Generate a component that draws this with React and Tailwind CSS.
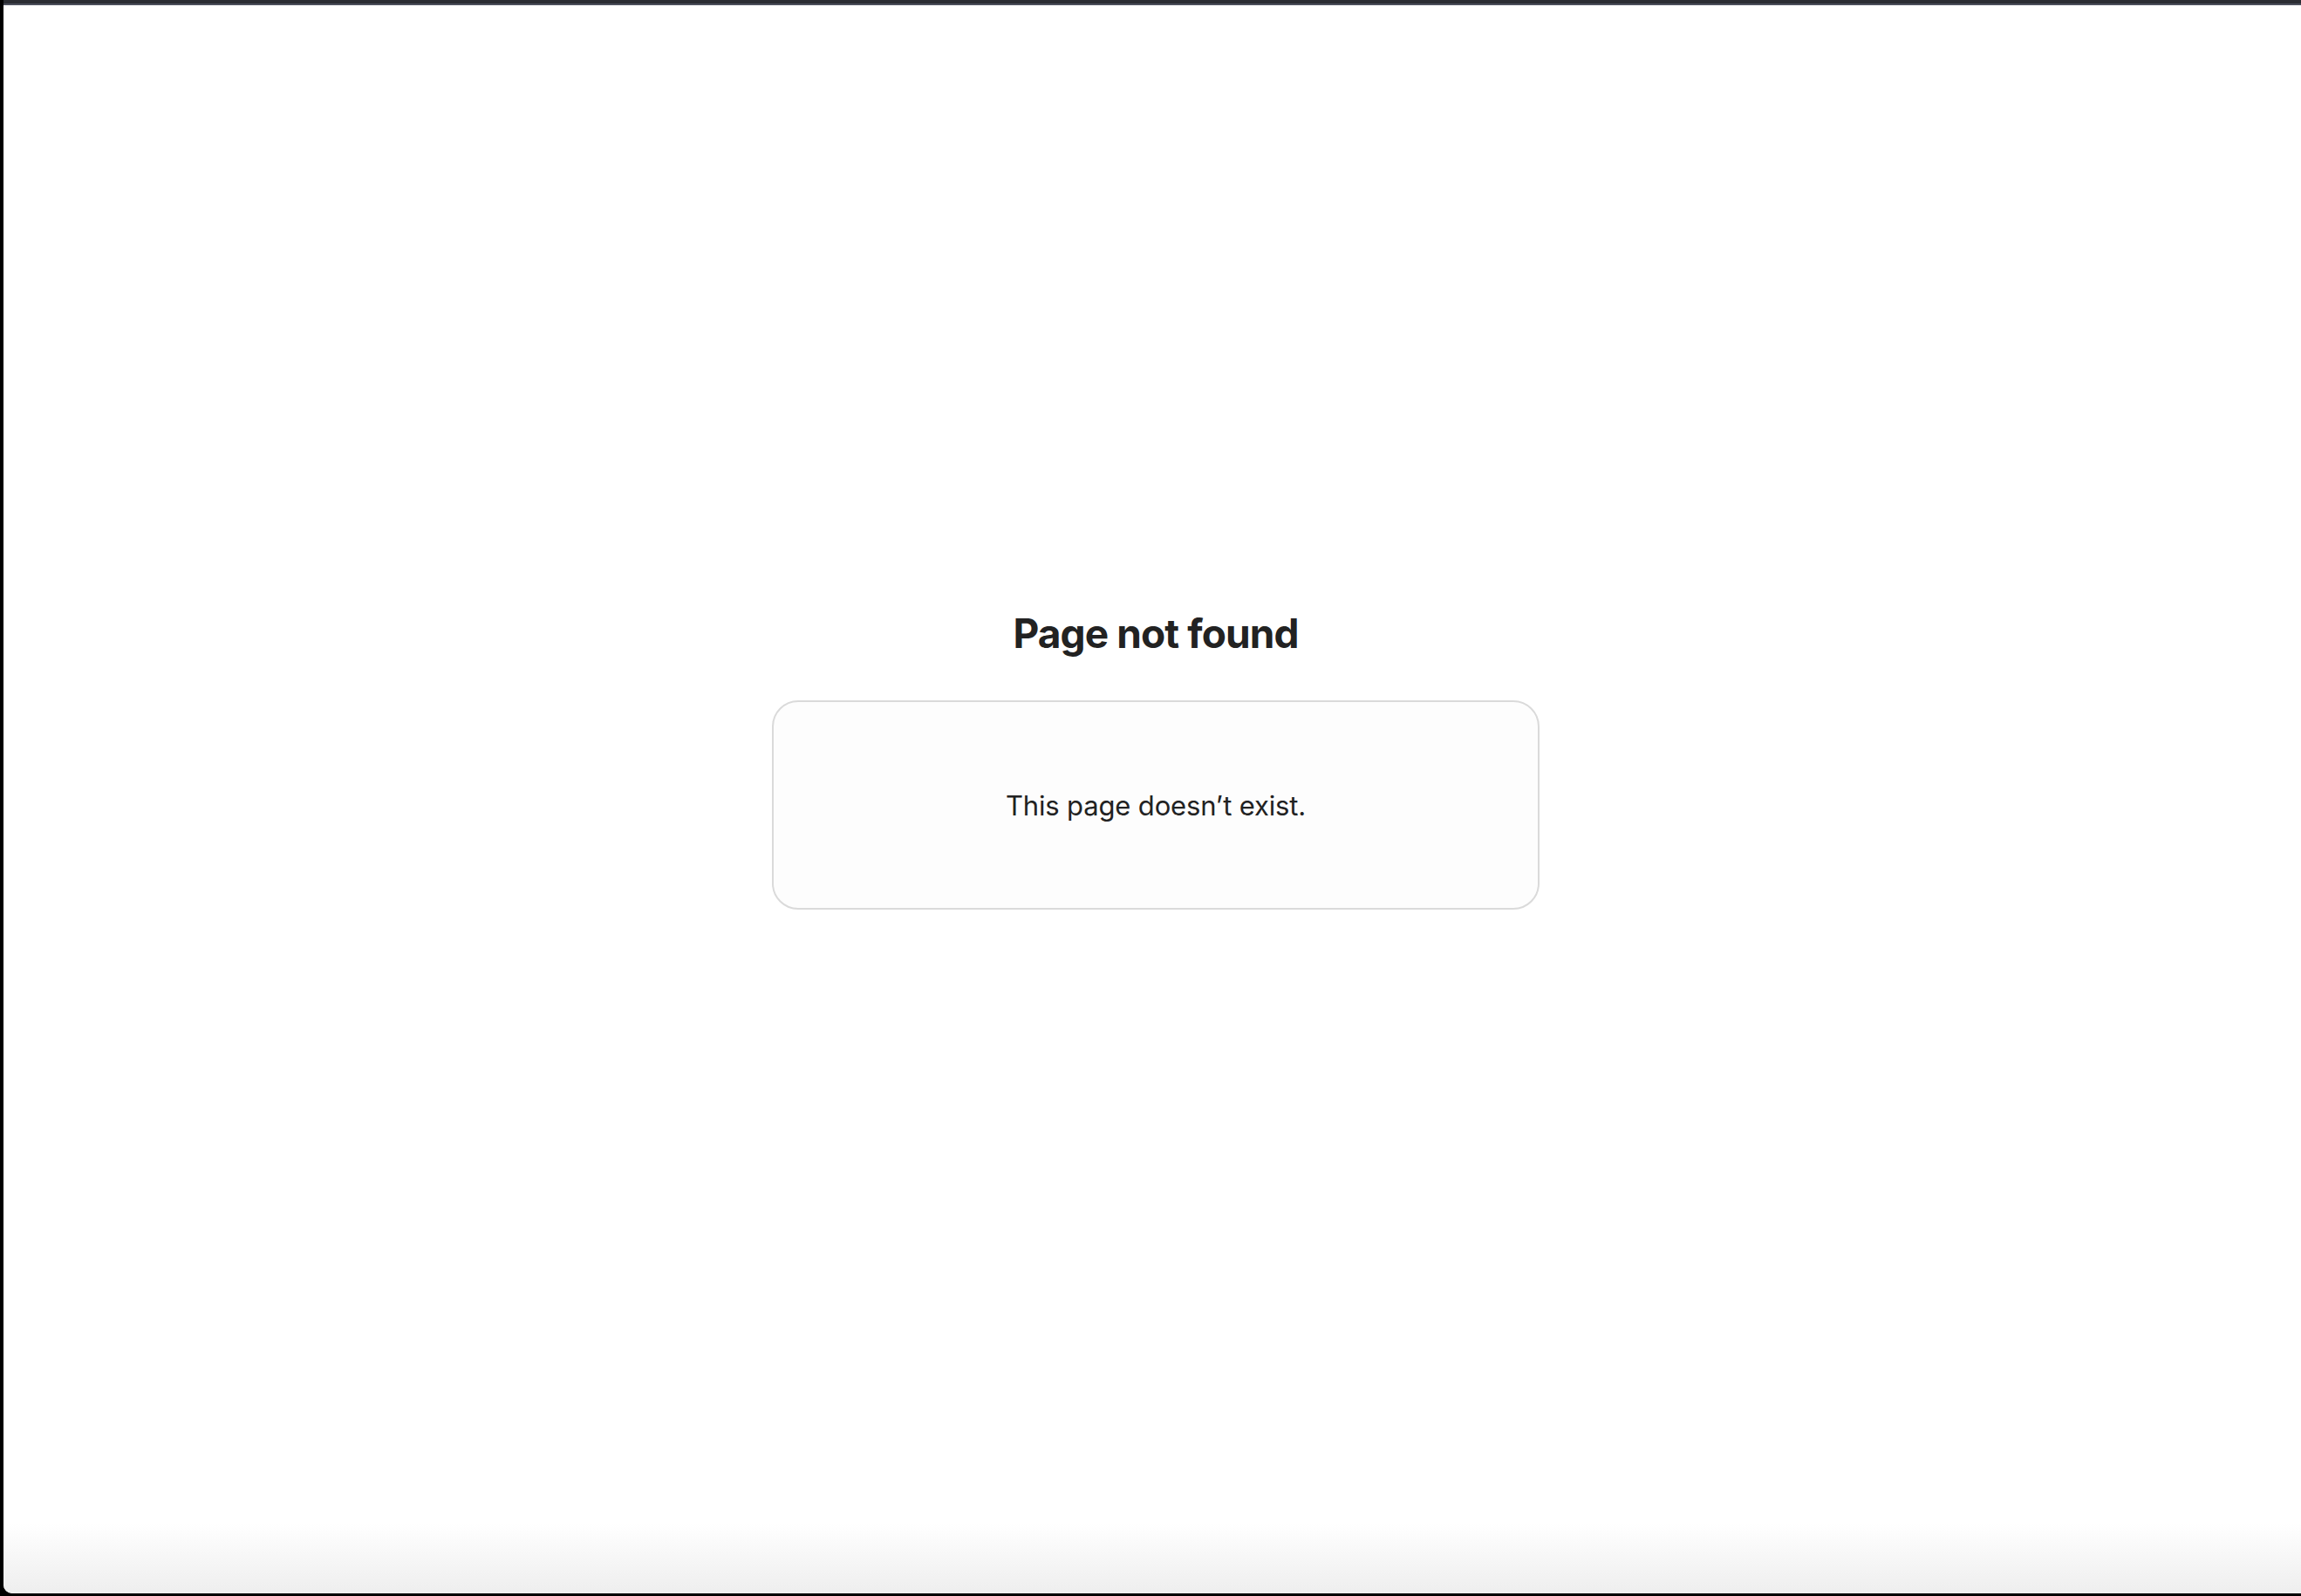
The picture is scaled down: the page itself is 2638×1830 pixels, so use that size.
import React from 'react';

export default function App() {
  return (
    <div className="w-[2638px] h-[1830px] bg-black flex flex-col pl-[4px] pb-[3px]" style={{ fontFamily: 'Inter, "Noto Sans", sans-serif' }}>
      <div className="h-[4px] bg-[#2b2d33]" />
      <div className="h-[2px] bg-[#4b4e5b]" />
      <div className="flex-1 flex flex-col bg-white rounded-bl-[10px] overflow-hidden">
        <div className="flex-1 flex flex-col items-center pt-[697px] pl-[8px]">
          <h1 className="text-[46px] leading-none font-bold text-[#222222] tracking-[-0.9px]">Page not found</h1>
          <div className="mt-[54px] w-[880px] h-[240px] rounded-[30px] border-2 border-[#dadada] bg-[#fdfdfd] flex items-center justify-center">
            <p className="text-[31px] leading-none text-[#222222] tracking-[-0.15px]">This page doesn’t exist.</p>
          </div>
        </div>
        <div className="h-[80px] bg-gradient-to-b from-white to-[#eeeeee]" />
      </div>
    </div>
  );
}
